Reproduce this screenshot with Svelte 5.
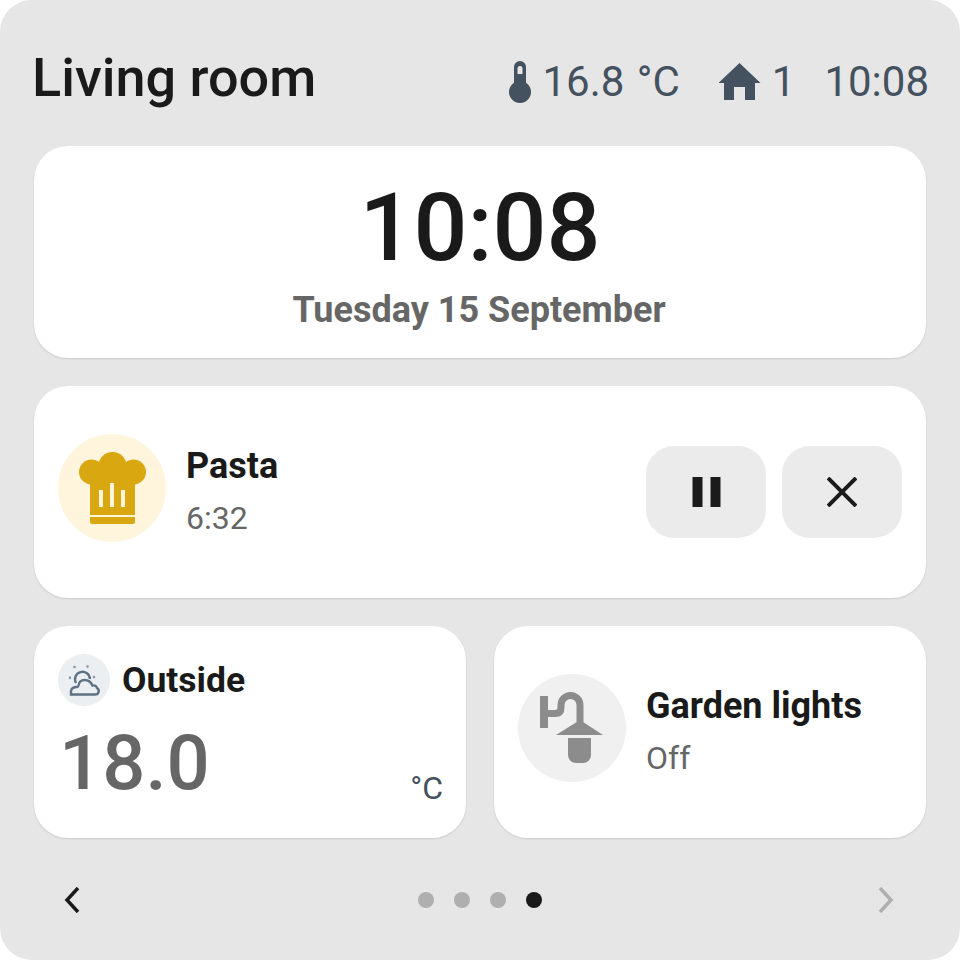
<script>
  const dots = [false, false, false, true];
</script>

<div class="screen">
  <header class="header">
    <h1 class="title">Living room</h1>
    <div class="status">
      <span class="stat">
        <svg viewBox="0 0 22 42" width="22" height="42">
          <rect x="5" y="0" width="12" height="30" rx="6" fill="#44515f" />
          <circle cx="11" cy="31" r="11" fill="#44515f" />
          <path d="M8.500 13V7.500a2.500 2.500 0 0 1 5 0V13z" fill="#e6e6e6" />
        </svg>
        16.8 °C
      </span>
      <span class="stat home">
        <svg viewBox="0 0 42 38" width="42" height="38">
          <path d="M20.500 0 41.500 20H36V37H26V24H15V37H5V20H-.5z" fill="#44515f" />
        </svg>
        1
      </span>
      <span class="stat">10:08</span>
    </div>
  </header>

  <section class="card clock">
    <div class="time">10:08</div>
    <div class="date">Tuesday 15 September</div>
  </section>

  <section class="card timer">
    <div class="badge badge-large badge-yellow">
      <svg viewBox="0 0 67 72" width="67" height="72" fill="#d9a70f">
        <circle cx="12.500" cy="20" r="12.500" />
        <circle cx="54.500" cy="20" r="12.500" />
        <circle cx="33.500" cy="14" r="14" />
        <path d="M11 20H56V63H11z" />
        <path d="M11 65H56V70a2 2 0 0 1-2 2H13a2 2 0 0 1-2-2z" />
        <path d="M20 38h4v17h-4zM31 31h4v24h-4zM42 38h4v17h-4z" fill="#fef5dc" />
      </svg>
    </div>
    <div class="info">
      <div class="name">Pasta</div>
      <div class="sub">6:32</div>
    </div>
    <div class="actions">
      <button class="action" aria-label="Pause">
        <svg viewBox="0 0 30 30" width="30" height="30"><path d="M1.500 0h10v31h-10zM19.500 0h10v31h-10z" fill="#1a1a1a" /></svg>
      </button>
      <button class="action" aria-label="Cancel">
        <svg viewBox="0 0 30 30" width="30" height="30"><path d="M1 1 29 29M29 1 1 29" stroke="#1a1a1a" stroke-width="4" fill="none" /></svg>
      </button>
    </div>
  </section>

  <div class="row">
    <section class="card outside">
      <div class="outside-head">
        <div class="badge badge-small">
          <svg viewBox="0 0 36 36" width="36" height="36" fill="none" stroke="#5d7385" stroke-width="2.400">
            <path d="M5 32.500h24a3.500 3.500 0 0 0 2-6.500c-.5-2-2.500-3-4.500-2.500-1.500-3.500-4.500-5.500-8-5.500-3 0-5.500 2-6 5.500-.2 1-.5 1.500-1.500 1.500-3 0-5.500 1-6 4 0 2.500 0 3.500 0 3.500z" />
            <path d="M10 21a7.500 7.500 0 1 1 14-4" />
            <path d="M8 4 9 6M22 3.500 21 5.500M3 15.500 5 16M29 14.500 27 15.500" opacity="0.7" />
          </svg>
        </div>
        <span class="name outside-name">Outside</span>
      </div>
      <div class="reading">
        <span class="value">18.0</span>
        <span class="unit">°C</span>
      </div>
    </section>

    <section class="card garden">
      <div class="badge badge-large badge-grey">
        <svg viewBox="0 0 64 72" width="64" height="72" fill="#8c8c8c">
          <rect x="0" y="4" width="8" height="32" />
          <path d="M8 21.500H15q6 0 6-6v-2.500a9.500 9.500 0 0 1 19 0V30" fill="none" stroke="#8c8c8c" stroke-width="7" />
          <path d="M40 28 63 43H16z" />
          <path d="M28 46H51V63a8 8 0 0 1-8 8H36a8 8 0 0 1-8-8z" />
        </svg>
      </div>
      <div class="info">
        <div class="name">Garden lights</div>
        <div class="sub">Off</div>
      </div>
    </section>
  </div>

  <nav class="nav">
    <svg viewBox="0 0 16 26" width="16" height="26" fill="none" stroke="#1a1a1a" stroke-width="3.500"><path d="M14 1 3 13l11 12" /></svg>
    <div class="dots">
      {#each dots as active}
        <span class="dot" class:active></span>
      {/each}
    </div>
    <svg viewBox="0 0 16 26" width="16" height="26" fill="none" stroke="#afafaf" stroke-width="3.500"><path d="M2 1l11 12L2 25" /></svg>
  </nav>
</div>

<style>
  :global(body) {
    margin: 0;
    background: #fff;
  }

  .screen {
    width: 960px;
    height: 960px;
    box-sizing: border-box;
    padding: 0 34px;
    background: #e6e6e6;
    border-radius: 32px;
    font-family: Roboto, "Liberation Sans", sans-serif;
    color: #1a1a1a;
    display: flex;
    flex-direction: column;
  }

  .header {
    flex: none;
    height: 146px;
    padding-top: 10px;
    box-sizing: border-box;
    display: flex;
    align-items: center;
    justify-content: space-between;
  }

  .title {
    margin: -2px 0 0 -2px;
    font-size: 54px;
    font-weight: 500;
  }

  .status {
    display: flex;
    align-items: center;
    gap: 29px;
    margin: 7px -3px 0 0;
    font-size: 42px;
    color: #44515f;
  }

  .stat {
    display: flex;
    align-items: center;
    gap: 11px;
    word-spacing: 2px;
  }

  .home {
    margin-left: 10px;
  }

  .card {
    flex: none;
    box-sizing: border-box;
    height: 212px;
    background: #fff;
    border-radius: 34px;
    box-shadow: 0 1px 2px rgba(0, 0, 0, 0.12);
  }

  .clock {
    display: flex;
    flex-direction: column;
    align-items: center;
    padding-top: 26px;
  }

  .time {
    font-size: 95px;
    font-weight: 500;
    line-height: 112px;
  }

  .date {
    margin: 6px 2px 0 0;
    font-size: 36px;
    font-weight: 700;
    color: #666;
    line-height: 40px;
  }

  .timer {
    margin-top: 28px;
    display: flex;
    align-items: center;
    padding: 0 24px;
    gap: 20px;
  }

  .badge {
    flex: none;
    border-radius: 50%;
    display: flex;
    align-items: center;
    justify-content: center;
  }

  .badge-large {
    width: 108px;
    height: 108px;
    margin-bottom: 8px;
  }

  .badge-yellow {
    background: #fef5dc;
  }

  .badge-grey {
    background: #f0f0f0;
  }

  .badge-small {
    width: 52px;
    height: 52px;
    background: #ebeff2;
  }

  .info {
    display: flex;
    flex-direction: column;
    gap: 10px;
  }

  .name {
    font-size: 36px;
    font-weight: 700;
    line-height: 42px;
  }

  .outside-name {
    font-size: 35.500px;
    margin-left: -1px;
  }

  .sub {
    font-size: 32px;
    color: #666;
    line-height: 42px;
  }

  .actions {
    margin-left: auto;
    display: flex;
    gap: 16px;
  }

  .action {
    width: 120px;
    height: 92px;
    padding: 0;
    border: none;
    border-radius: 28px;
    background: #ebebeb;
    display: flex;
    align-items: center;
    justify-content: center;
  }

  .row {
    flex: none;
    margin-top: 28px;
    display: grid;
    grid-template-columns: 432px 432px;
    gap: 28px;
  }

  .outside {
    padding: 28px 24px 0;
  }

  .outside-head {
    display: flex;
    align-items: center;
    gap: 13px;
  }

  .reading {
    display: flex;
    justify-content: space-between;
    align-items: flex-end;
    margin-top: 12px;
  }

  .value {
    font-size: 76px;
    font-weight: 500;
    color: #666;
    line-height: 90px;
    margin-left: 1px;
  }

  .unit {
    font-size: 32px;
    color: #44515f;
    line-height: 40px;
    margin-right: -1px;
  }

  .garden {
    display: flex;
    align-items: center;
    padding: 0 24px;
    gap: 20px;
  }

  .nav {
    flex: none;
    height: 122px;
    box-sizing: border-box;
    padding: 2px 32px 0 30px;
    display: flex;
    align-items: center;
    justify-content: space-between;
  }

  .dots {
    display: flex;
    gap: 20px;
    margin-left: 2px;
  }

  .dot {
    width: 16px;
    height: 16px;
    border-radius: 50%;
    background: #afafaf;
  }

  .dot.active {
    background: #1a1a1a;
  }
</style>
